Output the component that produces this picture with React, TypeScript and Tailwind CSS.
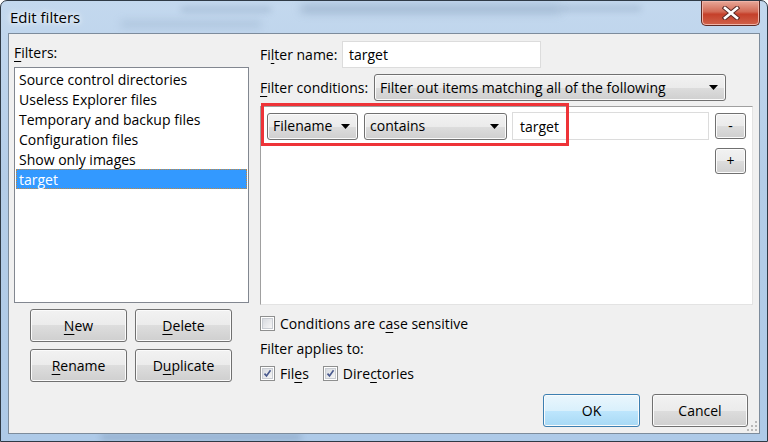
import React from 'react';

const btnFace =
  'border border-[#707070] rounded-[3px] bg-[linear-gradient(#f2f2f2,#ebebeb_50%,#dddddd_50%,#cfcfcf)] shadow-[inset_0_0_0_1px_#fbfbfb]';

function U({ children }: { children: React.ReactNode }) {
  return <span className="underline underline-offset-[3px] decoration-1">{children}</span>;
}

function Arrow() {
  return (
    <svg width="9" height="5" viewBox="0 0 9 5">
      <path d="M0 0h9L4.5 5z" fill="#000" />
    </svg>
  );
}

function Combo({ text, className }: { text: string; className: string }) {
  return (
    <div className={`${btnFace} ${className} flex items-center justify-between pl-[5px] pr-[7px]`}>
      <span className="leading-none">{text}</span>
      <Arrow />
    </div>
  );
}

function Button({ children, className }: { children: React.ReactNode; className: string }) {
  return (
    <div className={`${btnFace} ${className} flex items-center justify-center`}>
      <span className="leading-none">{children}</span>
    </div>
  );
}

function Check({ checked }: { checked?: boolean }) {
  return (
    <div className="flex h-[15px] w-[15px] items-center justify-center border border-[#8e8f8f] bg-white">
      <div className="flex h-[11px] w-[11px] items-center justify-center border border-[#c8ccd2] bg-[linear-gradient(135deg,#d8dbe0,#f6f6f6)]">
        {checked && (
          <svg width="11" height="11" viewBox="0 0 11 11">
            <path d="M1.8 5.6 4.3 8.4 9.2 1.6" fill="none" stroke="#4a5a8e" strokeWidth="2" />
          </svg>
        )}
      </div>
    </div>
  );
}

export default function App() {
  const items = [
    'Source control directories',
    'Useless Explorer files',
    'Temporary and backup files',
    'Configuration files',
    'Show only images',
  ];

  return (
    <div className="relative h-[442px] w-[768px] overflow-hidden rounded-t-[7px] border border-[#2f3a46] bg-[linear-gradient(180deg,#c3d8ee,#b4cde8_40%,#aecae8)] font-['Open_Sans','Noto_Sans',sans-serif] text-[14px] text-black">
      {/* blurred glass shapes behind the title bar */}
      <div className="absolute left-[300px] top-[4px] h-[8px] w-[260px] bg-[#6d88a6]/40 blur-[4px]" />
      <div className="absolute left-[180px] top-[6px] h-[5px] w-[90px] bg-[#6d88a6]/30 blur-[3px]" />
      <div className="absolute left-[120px] top-[20px] h-[6px] w-[140px] bg-[#6d88a6]/25 blur-[4px]" />
      <div className="absolute left-[560px] top-[5px] h-[5px] w-[80px] bg-[#6d88a6]/30 blur-[3px]" />
      <div className="absolute left-[100px] bottom-[1px] h-[6px] w-[200px] bg-[#6d88a6]/40 blur-[3px]" />

      {/* title bar */}
      <div className="relative flex h-[32px] items-center pl-[9px]">
        <span className="text-[15px] [text-shadow:0_0_8px_#ffffff,0_0_4px_#ffffff]">Edit filters</span>
      </div>

      {/* close button */}
      <div className="absolute right-[7px] top-0 flex h-[25px] w-[59px] items-center justify-center rounded-b-[5px] border border-t-0 border-[#5e2a24] bg-[linear-gradient(#e8a899,#d26a55_45%,#c5402a_55%,#d0624a)] shadow-[inset_0_0_0_1px_#f0b4a8]">
        <svg width="18" height="14" viewBox="0 0 18 14">
          <path d="M3 2l12 10M15 2 3 12" stroke="#5a2a26" strokeWidth="4.5" strokeLinecap="square" />
          <path d="M3 2l12 10M15 2 3 12" stroke="#ffffff" strokeWidth="2.6" strokeLinecap="square" />
        </svg>
      </div>

      {/* client area */}
      <div className="relative mx-[7px] flex h-[401px] border border-[#7d8c9c] bg-[#f0f0f0] pl-[5px]">
        {/* left column */}
        <div className="flex w-[235px] flex-col">
          <div className="flex h-[33px] items-center pt-[3px]">
            <span>
              <U>F</U>ilters:
            </span>
          </div>
          <div className="flex h-[236px] flex-col border border-[#828790] bg-white p-[1px]">
            {items.map((t) => (
              <div key={t} className="flex h-[20px] items-center pl-[3px]">
                {t}
              </div>
            ))}
            <div className="flex h-[20px] items-center border border-dotted border-[#c8883a] bg-[#3399ff] pl-[2px] text-white">
              target
            </div>
          </div>
          <div className="ml-[16px] mt-[6px] grid w-[202px] grid-cols-2 gap-x-[8px] gap-y-[7px]">
            <Button className="h-[33px]">
              <U>N</U>ew
            </Button>
            <Button className="h-[33px]">
              <U>D</U>elete
            </Button>
            <Button className="h-[33px]">
              <U>R</U>ename
            </Button>
            <Button className="h-[33px]">
              D<U>u</U>plicate
            </Button>
          </div>
        </div>

        {/* right column */}
        <div className="ml-[11px] flex w-[493px] flex-col">
          <div className="mt-[7px] flex h-[27px] items-center">
            <span className="w-[82px]">
              Fi<U>l</U>ter name:
            </span>
            <div className="flex h-[27px] w-[199px] items-center border border-[#dcdcdc] bg-white pl-[6px]">
              target
            </div>
          </div>
          <div className="mt-[6px] flex h-[27px] items-center">
            <span className="w-[114px]">
              <U>F</U>ilter conditions:
            </span>
            <Combo text="Filter out items matching all of the following" className="h-[27px] w-[352px]" />
          </div>

          {/* conditions panel */}
          <div className="relative mt-[5px] flex h-[199px] w-[493px] flex-col border border-[#a0a0a0] border-b-[#e3e3e3] border-r-[#e3e3e3] bg-white pl-[6px] pt-[5px]">
            <div className="flex items-center">
              <Combo text="Filename" className="h-[27px] w-[91px]" />
              <Combo text="contains" className="ml-[6px] h-[27px] w-[143px]" />
              <div className="ml-[5px] flex h-[28px] w-[197px] items-center border border-[#dcdcdc] bg-white pl-[7px]">
                target
              </div>
              <Button className="ml-[6px] h-[26px] w-[31px]">-</Button>
            </div>
            <div className="mt-[8px] flex justify-end pr-[6px]">
              <Button className="h-[26px] w-[31px]">+</Button>
            </div>
            {/* red highlight annotation */}
            <div className="absolute left-[0px] top-[-4px] h-[43px] w-[308px] border-[3px] border-[#ee3338]" />
          </div>

          <div className="mt-[8px] flex h-[20px] items-center gap-[5px]">
            <Check />
            <span>
              Conditions are c<U>a</U>se sensitive
            </span>
          </div>
          <div className="mt-[5px] flex h-[20px] items-center">Filter applies to:</div>
          <div className="mt-[5px] flex h-[20px] items-center">
            <Check checked />
            <span className="ml-[5px]">
              Fil<U>e</U>s
            </span>
            <span className="ml-[14px]">
              <Check checked />
            </span>
            <span className="ml-[5px]">
              Dire<U>c</U>tories
            </span>
          </div>
          <div className="mt-[11px] flex justify-end gap-[12px] pr-[5px]">
            <Button className="h-[33px] w-[97px] !border-[#3c7fb1] !bg-[linear-gradient(#eaf6fd,#d9f0fc_50%,#bee6fd_50%,#a7d9f5)] shadow-[inset_0_0_0_1px_#c7e9fc]">
              OK
            </Button>
            <Button className="h-[33px] w-[96px]">Cancel</Button>
          </div>
        </div>

        {/* resize grip */}
        <svg className="absolute bottom-[1px] right-[1px]" width="12" height="12" viewBox="0 0 12 12">
          {[
            [9, 1],
            [9, 5],
            [5, 5],
            [9, 9],
            [5, 9],
            [1, 9],
          ].map(([x, y]) => (
            <rect key={`${x}-${y}`} x={x} y={y} width="2" height="2" fill="#b8b8b8" />
          ))}
        </svg>
      </div>
    </div>
  );
}
